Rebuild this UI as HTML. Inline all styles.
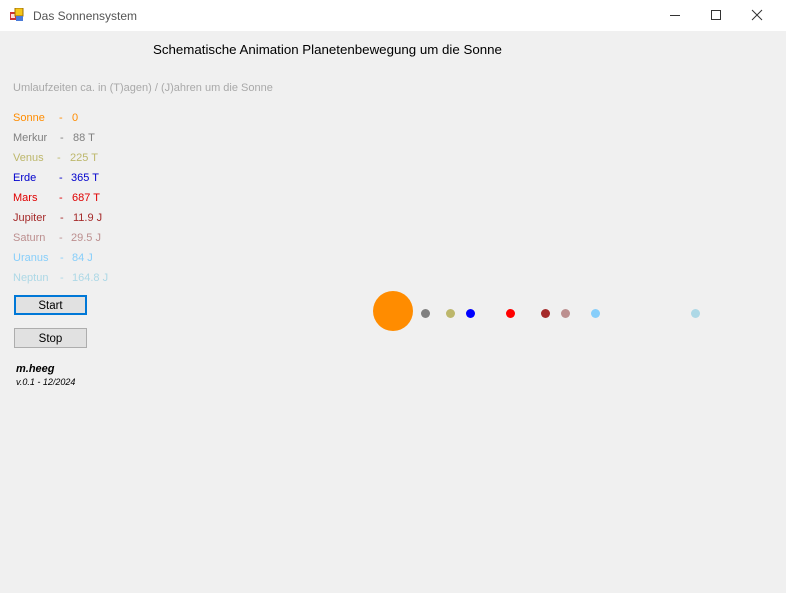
<!DOCTYPE html>
<html><head><style>
body{margin:0;width:786px;height:593px;overflow:hidden;background:#f0f0f0;font-family:"Liberation Sans",sans-serif;position:relative}
.tb{position:absolute;left:0;top:0;width:786px;height:31px;background:#fff}
.t{position:absolute;white-space:nowrap;font-size:11px}
.btn{position:absolute;width:73px;height:20px;background:#e1e1e1;border:1px solid #adadad;box-sizing:border-box;font-size:11.5px;text-align:center;line-height:20px;color:#000}
.d{position:absolute;border-radius:50%}
</style></head><body>
<div class="tb"></div>
<svg style="position:absolute;left:10px;top:8px" width="14" height="14"><rect x="0" y="4" width="6" height="8" fill="#c33"/><rect x="1" y="6" width="4" height="4" fill="#fdd"/><rect x="5" y="0" width="8" height="8" fill="#f5c518" stroke="#a07000" stroke-width="1"/><rect x="6" y="8" width="7" height="5" fill="#4a7ad8"/></svg>
<div class="t" style="left:33px;top:9px;font-size:12px;color:#555">Das Sonnensystem</div>
<svg style="position:absolute;left:660px;top:8px" width="110" height="16"><line x1="10" y1="7.5" x2="20" y2="7.5" stroke="#333"/><rect x="51.5" y="2.5" width="9" height="9" fill="none" stroke="#333"/><path d="M92 2 L102 12 M102 2 L92 12" stroke="#333"/></svg>
<div class="t" style="left:153px;top:42px;font-size:13.3px;color:#000">Schematische Animation Planetenbewegung um die Sonne</div>
<div class="t" style="left:13px;top:82px;color:#a9a9a9">Umlaufzeiten ca. in (T)agen) / (J)ahren um die Sonne</div>

<div style="color:#ff8c00"><div class="t" style="left:13px;top:112px">Sonne</div><div class="t" style="left:59px;top:112px">-</div><div class="t" style="left:72px;top:112px">0</div></div>
<div style="color:#808080"><div class="t" style="left:13px;top:132px">Merkur</div><div class="t" style="left:60px;top:132px">-</div><div class="t" style="left:73px;top:132px">88 T</div></div>
<div style="color:#bdb76b"><div class="t" style="left:13px;top:152px">Venus</div><div class="t" style="left:57px;top:152px">-</div><div class="t" style="left:70px;top:152px">225 T</div></div>
<div style="color:#0000cd"><div class="t" style="left:13px;top:172px">Erde</div><div class="t" style="left:59px;top:172px">-</div><div class="t" style="left:71px;top:172px">365 T</div></div>
<div style="color:#e00000"><div class="t" style="left:13px;top:192px">Mars</div><div class="t" style="left:59px;top:192px">-</div><div class="t" style="left:72px;top:192px">687 T</div></div>
<div style="color:#a52a2a"><div class="t" style="left:13px;top:212px">Jupiter</div><div class="t" style="left:60px;top:212px">-</div><div class="t" style="left:73px;top:212px">11.9 J</div></div>
<div style="color:#bc8f8f"><div class="t" style="left:13px;top:232px">Saturn</div><div class="t" style="left:59px;top:232px">-</div><div class="t" style="left:71px;top:232px">29.5 J</div></div>
<div style="color:#87cefa"><div class="t" style="left:13px;top:252px">Uranus</div><div class="t" style="left:60px;top:252px">-</div><div class="t" style="left:72px;top:252px">84 J</div></div>
<div style="color:#add8e6"><div class="t" style="left:13px;top:272px">Neptun</div><div class="t" style="left:60px;top:272px">-</div><div class="t" style="left:72px;top:272px">164.8 J</div></div>

<div class="btn" style="left:14px;top:295px;border:2px solid #0078d7;line-height:18px">Start</div>
<div class="btn" style="left:14px;top:328px">Stop</div>
<div class="t" style="left:16px;top:363px;font-weight:bold;font-style:italic;color:#000;font-size:11px">m.heeg</div>
<div class="t" style="left:16px;top:377px;font-style:italic;color:#000;font-size:9px">v.0.1 - 12/2024</div>
<div class="d" style="left:373px;top:291px;width:40px;height:40px;background:#ff8c00"></div>
<div class="d" style="left:421px;top:309px;width:9px;height:9px;background:#808080"></div>
<div class="d" style="left:446px;top:309px;width:9px;height:9px;background:#bdb76b"></div>
<div class="d" style="left:466px;top:309px;width:9px;height:9px;background:#0000ff"></div>
<div class="d" style="left:506px;top:309px;width:9px;height:9px;background:#ff0000"></div>
<div class="d" style="left:541px;top:309px;width:9px;height:9px;background:#a52a2a"></div>
<div class="d" style="left:561px;top:309px;width:9px;height:9px;background:#bc8f8f"></div>
<div class="d" style="left:591px;top:309px;width:9px;height:9px;background:#87cefa"></div>
<div class="d" style="left:691px;top:309px;width:9px;height:9px;background:#add8e6"></div>
</body></html>
